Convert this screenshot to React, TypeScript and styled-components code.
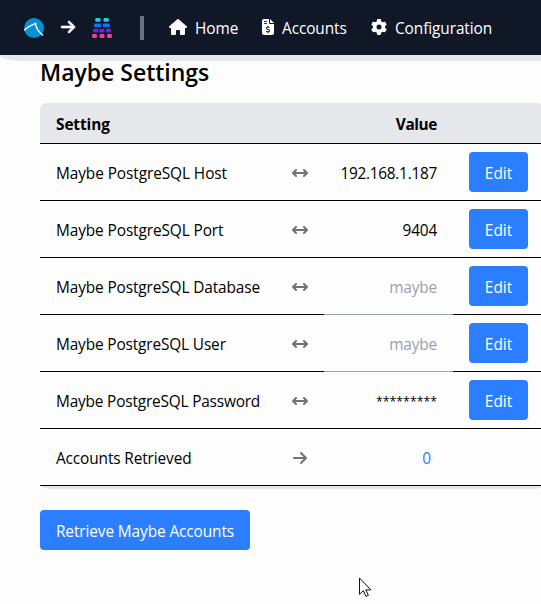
import React from "react";
import styled, { createGlobalStyle } from "styled-components";
import {
  FaArrowRight,
  FaArrowsLeftRight,
  FaFileInvoiceDollar,
  FaGear,
  FaHouse,
} from "react-icons/fa6";

const GlobalStyle = createGlobalStyle`
  * { box-sizing: border-box; }
  body {
    margin: 0;
    overflow: hidden;
    background: #fdfdfd;
    color: #000;
    font: 15.4px/24px "Open Sans", "Noto Sans", sans-serif;
  }
  svg { display: block; flex: none; }
`;

const Page = styled.div`
  width: 541px;
  height: 604px;
  overflow: hidden;
`;

const NavBar = styled.nav`
  display: flex;
  align-items: center;
  height: 55px;
  padding-left: 24px;
  background: #101828;
  color: #fff;
`;

const Brand = styled.div`
  display: flex;
  align-items: center;
  gap: 16px;
  width: 116px;
`;

const BrandArrow = styled(FaArrowRight)`
  margin-bottom: 2px;
  stroke: currentColor;
  stroke-width: 22px;
`;

const Divider = styled.div`
  width: 4px;
  height: 24px;
  margin-right: 25px;
  background: #6a7282;
`;

const NavLink = styled.a<{ $width: number; $gap: number; $tracking: number }>`
  display: flex;
  align-items: center;
  gap: ${(p) => p.$gap}px;
  width: ${(p) => p.$width}px;
  letter-spacing: ${(p) => p.$tracking}px;
  white-space: nowrap;
  svg { margin-bottom: 2px; }
  span { padding-top: 2px; }
`;

const NavEdge = styled.div`
  height: 6px;
  background: #e5e7eb;
  border-bottom-left-radius: 20px 6px;
`;

const Content = styled.main`
  width: 544px;
  padding-left: 40px;
`;

const Title = styled.h1`
  height: 42px;
  margin: 0;
  font-size: 23px;
  font-weight: 600;
  line-height: 22px;
  letter-spacing: -0.02px;
`;

const Table = styled.div`
  height: 386px;
  padding-bottom: 3px;
  overflow: hidden;
  background: #e5e7eb;
  border-radius: 8px 8px 12px 12px / 8px 8px 4px 4px;
`;

const Row = styled.div<{ $head?: boolean }>`
  display: grid;
  grid-template-columns: 236px 48px 129px 91px;
  height: ${(p) => (p.$head ? 41 : 57)}px;
  background: ${(p) => (p.$head ? "#e5e7eb" : "#fdfdfd")};
  font-weight: ${(p) => (p.$head ? 700 : 400)};
`;

const Cell = styled.div<{ $right?: boolean; $muted?: boolean; $tracking?: number }>`
  display: flex;
  align-items: center;
  justify-content: ${(p) => (p.$right ? "flex-end" : "flex-start")};
  padding: 4px 16px 0;
  border-bottom: 1px solid ${(p) => (p.$muted ? "#99a1af" : "#000")};
  color: ${(p) => (p.$muted ? "#99a1af" : "inherit")};
  letter-spacing: ${(p) => p.$tracking ?? 0}px;
  white-space: nowrap;
`;

const IconCell = styled(Cell)`
  padding-top: 2px;
  color: #6a7282;
`;

const ActionCell = styled(Cell)`
  padding-top: 0;
`;

const Secret = styled.span`
  font-size: 12.3px;
`;

const Button = styled.button<{ $width: number; $tracking: number }>`
  width: ${(p) => p.$width}px;
  height: 40px;
  padding: 4px 0 0;
  border: 0;
  border-radius: 4px;
  background: #2b7fff;
  color: #fff;
  font: inherit;
  letter-spacing: ${(p) => p.$tracking}px;
  white-space: nowrap;
`;

const Count = styled.a`
  margin-right: 6px;
  color: #2b7fff;
`;

const Footer = styled.div`
  margin-top: 21px;
`;

const Pointer = styled.svg`
  position: absolute;
  left: 359px;
  top: 577px;
`;

const settings = [
  { name: "Maybe PostgreSQL Host", tracking: -0.08, value: "192.168.1.187", valueTracking: -0.27 },
  { name: "Maybe PostgreSQL Port", tracking: -0.1, value: "9404", valueTracking: -0.2 },
  { name: "Maybe PostgreSQL Database", tracking: -0.12, value: "maybe", valueTracking: -0.15, muted: true },
  { name: "Maybe PostgreSQL User", tracking: -0.14, value: "maybe", valueTracking: -0.15, muted: true },
  { name: "Maybe PostgreSQL Password", tracking: -0.18, value: "*********", secret: true },
];

const SharkLogo = () => (
  <svg width="20" height="20" viewBox="0 0 20 20">
    <circle cx="10" cy="10" r="10" fill="#0690d4" />
    <path d="M.2 12.3C3.5 9 7 7 11.6 5.3c.1 5 3.3 9 7.5 12.2" fill="none" stroke="#fff" strokeWidth="1.3" />
  </svg>
);

const blocks = [
  { y: 0, color: "#22ccee", xs: [3.3, 11.6], w: 5.2 },
  { y: 5.4, color: "#1570ef", xs: [2, 10.8], w: 7.2 },
  { y: 10.8, color: "#6927da", xs: [1, 7.2, 13.8], w: 5.3 },
  { y: 16.1, color: "#f63d96", xs: [0, 7.5, 15], w: 5 },
];

const MaybeLogo = () => (
  <svg width="20" height="20" viewBox="0 0 20 20">
    {blocks.map((b) =>
      b.xs.map((x) => (
        <rect key={`${b.y}-${x}`} x={x} y={b.y} width={b.w} height="3.8" rx="1.3" fill={b.color} />
      )),
    )}
  </svg>
);

export default function App() {
  return (
    <Page>
      <GlobalStyle />
      <NavBar>
        <Brand>
          <SharkLogo />
          <BrandArrow size={16} />
          <MaybeLogo />
        </Brand>
        <Divider />
        <NavLink $width={91} $gap={8} $tracking={0}>
          <FaHouse size={18} />
          <span>Home</span>
        </NavLink>
        <NavLink $width={111} $gap={6} $tracking={-0.1}>
          <FaFileInvoiceDollar size={16} />
          <span>Accounts</span>
        </NavLink>
        <NavLink $width={140} $gap={8} $tracking={-0.08}>
          <FaGear size={16} />
          <span>Configuration</span>
        </NavLink>
      </NavBar>
      <NavEdge />
      <Content>
        <Title>Maybe Settings</Title>
        <Table>
          <Row $head>
            <Cell $tracking={-0.1}>Setting</Cell>
            <Cell />
            <Cell $right $tracking={-0.4}>Value</Cell>
            <Cell />
          </Row>
          {settings.map((s) => (
            <Row key={s.name}>
              <Cell $tracking={s.tracking}>{s.name}</Cell>
              <IconCell><FaArrowsLeftRight size={16} /></IconCell>
              <Cell $right $muted={s.muted} $tracking={s.valueTracking}>
                {s.secret ? <Secret>{s.value}</Secret> : s.value}
              </Cell>
              <ActionCell><Button $width={59} $tracking={0}>Edit</Button></ActionCell>
            </Row>
          ))}
          <Row>
            <Cell $tracking={-0.12}>Accounts Retrieved</Cell>
            <IconCell><FaArrowRight size={16} /></IconCell>
            <Cell $right><Count>0</Count></Cell>
            <Cell />
          </Row>
        </Table>
        <Footer>
          <Button $width={210} $tracking={-0.1}>Retrieve Maybe Accounts</Button>
        </Footer>
      </Content>
      <Pointer width="13" height="21" viewBox="0 0 13 21">
        <path d="M.5 1v16.3l3.8-3.6 2.7 5.7 2.4-1.1-2.6-5.4h5.1z" fill="#fff" stroke="#101020" />
      </Pointer>
    </Page>
  );
}
